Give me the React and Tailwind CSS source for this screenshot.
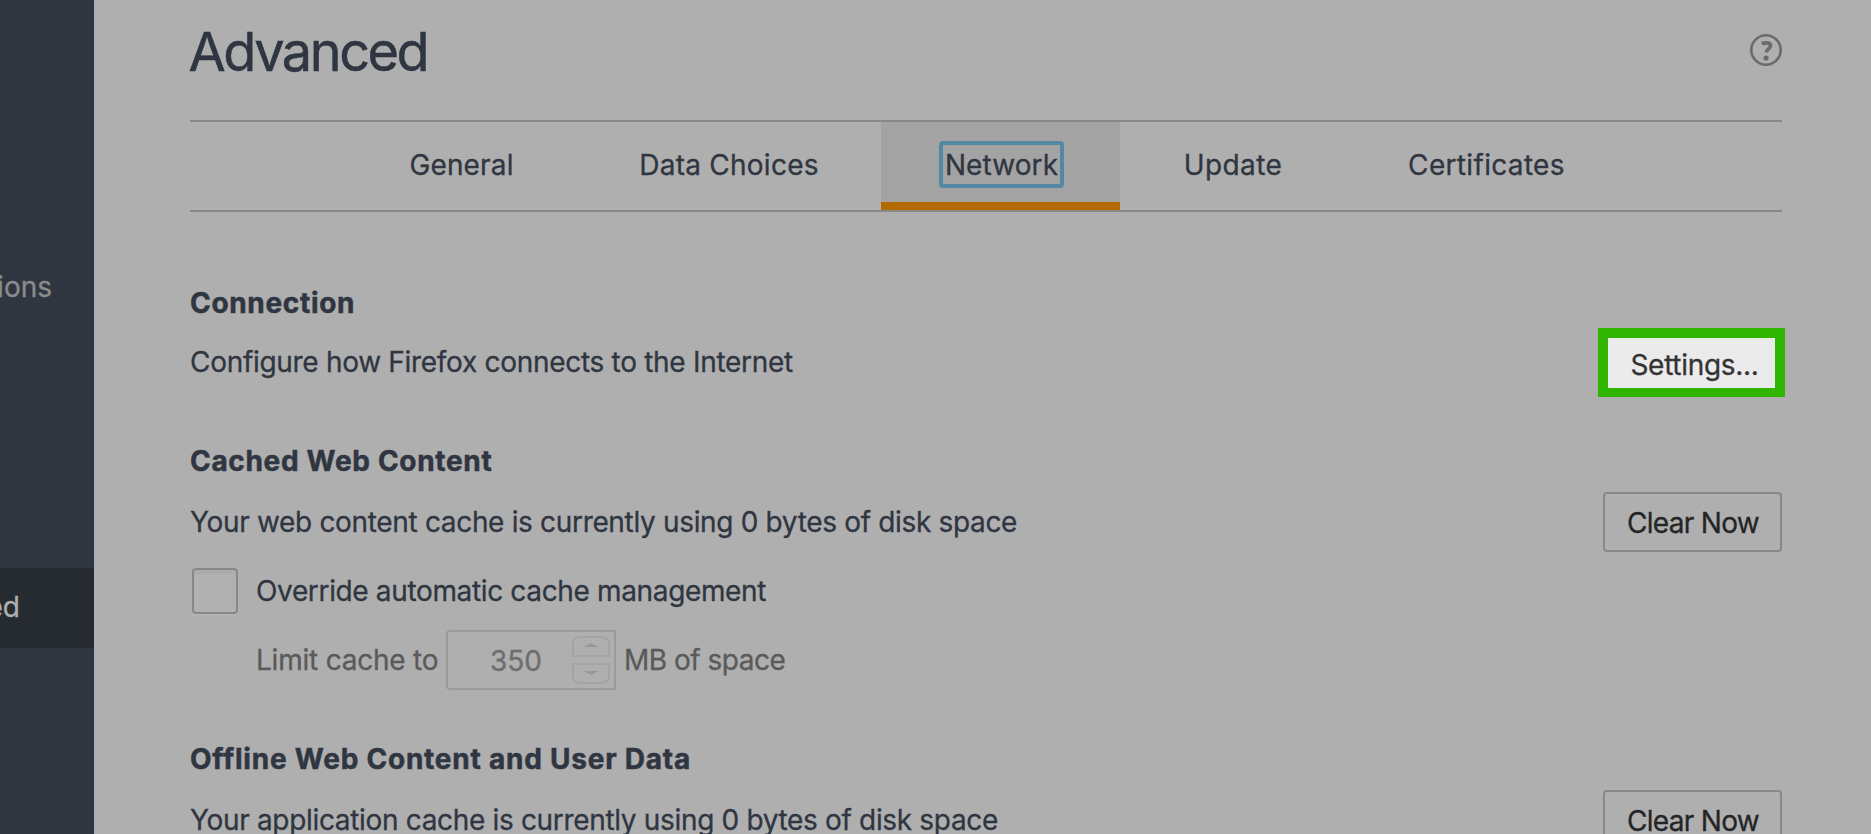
const tabs = [
  { label: "General", width: "w-[230px] pr-px", spacing: "tracking-[0.15px]" },
  { label: "Data Choices", width: "w-[304px]", spacing: "tracking-[0.25px]" },
  { label: "Network", width: "w-[239px]", spacing: "tracking-[0.1px]", active: true },
  { label: "Update", width: "w-[226px]", spacing: "tracking-[0.4px]" },
  { label: "Certificates", width: "w-[281px]", spacing: "tracking-[0.33px]" },
];

function Sidebar() {
  return (
    <aside className="flex w-[94px] shrink-0 flex-col overflow-hidden bg-[#303640]">
      <div className="mt-[247px] flex h-20 items-center justify-end pr-[42px] text-[#8b8b8b]">
        <span className="whitespace-nowrap">Applications</span>
      </div>
      <div className="mt-[241px] flex h-20 items-center justify-end bg-[#252b30] pr-[74px] pb-0.5 text-[#afafaf]">
        <span className="whitespace-nowrap">Advanced</span>
      </div>
    </aside>
  );
}

function HelpIcon() {
  return (
    <svg className="mt-px size-8" viewBox="0 0 32 32" fill="none">
      <circle cx="16" cy="16" r="14.7" stroke="#6b6b6b" strokeWidth="2.6" />
      <path
        d="M11.8 9.6C13.5 9 15 8.900 16.500 8.900c2.600 0 4 .8 4 2.900 0 1.800-1.200 2.600-2.400 3.600-1.100.9-1.700 1.600-1.700 3.100"
        stroke="#6b6b6b"
        strokeWidth="3.700"
      />
      <circle cx="16.100" cy="24" r="2.600" fill="#6b6b6b" />
    </svg>
  );
}

function Tabs() {
  return (
    <nav className="flex h-[92px] justify-center border-y-2 border-[#888888] pl-0.5">
      {tabs.map((tab) => (
        <div
          key={tab.label}
          className={`flex flex-col items-center ${tab.width} ${tab.spacing} ${
            tab.active ? "border-b-8 border-[#b36b00] bg-[#a3a3a3]" : ""
          }`}
        >
          <span
            className={`mt-[19px] flex h-[47px] items-center justify-center whitespace-nowrap ${
              tab.active ? "ml-0.5 w-[125px] rounded border-4 border-[#5388a2]" : ""
            }`}
          >
            {tab.label}
          </span>
        </div>
      ))}
    </nav>
  );
}

function ClearButton() {
  return (
    <button className="flex h-[60px] w-[179px] items-center justify-center rounded-[4px] border-2 border-[#888888] pt-0.5 pl-px tracking-[-0.68px] text-[#252525]">
      <span className="whitespace-nowrap">Clear Now</span>
    </button>
  );
}

function Spinner() {
  return (
    <svg className="h-12 w-[38px]" viewBox="0 0 38 48" fill="none">
      <path d="M1 20V8a7 7 0 0 1 7-7h22a7 7 0 0 1 7 7v12z" stroke="#a4a4a4" strokeWidth="2" />
      <path d="M1 28v12a7 7 0 0 0 7 7h22a7 7 0 0 0 7-7V28z" stroke="#a4a4a4" strokeWidth="2" />
      <path d="M11.500 11h15L19 7z" fill="#979797" />
      <path d="M11.500 35h15L19 39z" fill="#979797" />
    </svg>
  );
}

export default function App() {
  return (
    <div className="flex h-[834px] w-[1871px] overflow-hidden bg-[#afafaf] font-['Inter',sans-serif] text-[28px] leading-[34px] text-[#2f3641] [-webkit-text-stroke:0.3px_currentColor]">
      <Sidebar />
      <main className="ml-24 w-[1592px] shrink-0">
        <header className="flex h-[120px] items-start justify-between pt-[33px]">
          <h1 className="-mt-[13px] -ml-[1.5px] text-[54px] leading-[63px] tracking-[-2.45px] [-webkit-text-stroke:0.5px_currentColor]">
            Advanced
          </h1>
          <HelpIcon />
        </header>
        <Tabs />

        <h2 className="mt-[74px] h-[34px] font-bold tracking-[0.68px] [-webkit-text-stroke:0.5px_currentColor]">
          <span>Connection</span>
        </h2>
        <div className="-mr-[3px] mt-2 flex h-[69px] items-center justify-between">
          <span className="-mt-px tracking-[-0.3px]">Configure how Firefox connects to the Internet</span>
          <button className="flex h-[69px] w-[187px] items-center justify-center border-10 border-b-9 border-[#2fb400] bg-[#ebebeb] pt-1 pl-1.5 tracking-[-0.3px] text-[#333333]">
            <span>Settings...</span>
          </button>
        </div>

        <h2 className="mt-[47px] h-[34px] font-bold tracking-[0.68px] [-webkit-text-stroke:0.5px_currentColor]">
          <span>Cached Web Content</span>
        </h2>
        <div className="mt-[14px] flex h-[60px] items-center justify-between">
          <span className="tracking-[-0.33px]">Your web content cache is currently using 0 bytes of disk space</span>
          <ClearButton />
        </div>
        <div className="mt-4 flex h-[46px] items-center pl-0.5">
          <div className="size-[46px] rounded-[4px] border-2 border-[#888888] bg-[#b1b1b1] shadow-[0_2px_2px_#b4b4b4,inset_0_4px_0_#acacac]" />
          <span className="ml-[18px] tracking-[-0.35px]">Override automatic cache management</span>
        </div>
        <div className="mt-4 flex h-[60px] items-center pl-[66px] text-[#5a5a5a]">
          <span className="w-[190px] tracking-[-0.22px]">Limit cache to</span>
          <div className="flex h-[60px] w-[170px] shrink-0 items-center justify-end rounded-l-[4px] border-2 border-[#9b9b9b] pr-1 text-[#6e6e6e]">
            <span className="mr-[30px] pt-0.5">350</span>
            <Spinner />
          </div>
          <span className="ml-2 tracking-[-0.5px]">MB of space</span>
        </div>

        <h2 className="mt-[52px] h-[34px] font-bold tracking-[0.77px] [-webkit-text-stroke:0.5px_currentColor]">
          <span>Offline Web Content and User Data</span>
        </h2>
        <div className="mt-[14px] flex h-[60px] items-center justify-between">
          <span className="tracking-[-0.33px]">Your application cache is currently using 0 bytes of disk space</span>
          <ClearButton />
        </div>
      </main>
    </div>
  );
}
